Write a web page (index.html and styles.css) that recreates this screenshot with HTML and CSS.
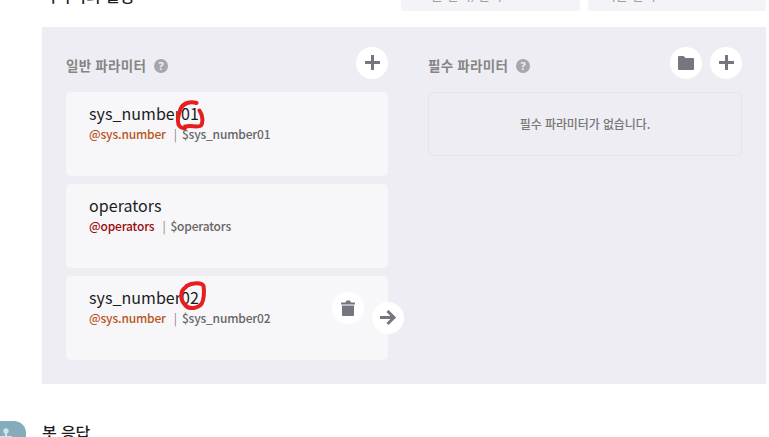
FILE: index.html
```html
<!DOCTYPE html>
<html lang="ko">
<head>
<meta charset="utf-8">
<title>파라미터 설정</title>
<link rel="stylesheet" href="styles.css">
</head>
<body>
<main class="page">
  <header class="toolbar">
    <h2 class="section-title">파라미터 설정</h2>
    <div class="field field-first"><span>문 선택, 선택</span></div>
    <div class="field field-last"><span>기본 선택</span></div>
  </header>

  <section class="panel">
    <div class="column general">
      <div class="column-head">
        <h3>일반 파라미터</h3>
        <span class="help">?</span>
        <div class="actions">
          <button class="round" aria-label="추가"><svg width="16" height="16"><path d="M7 0h3v6h6v3h-6v6h-3v-6h-6v-3h6z"/></svg></button>
        </div>
      </div>
      <div class="cards">
        <article class="card">
          <div class="name">sys_number01</div>
          <div class="meta"><span class="type">@sys.number</span><span class="bar">|</span><span>$sys_number01</span></div>
          <svg class="mark mark-first" width="34" height="36" viewBox="0 0 34 36"><path d="M22.500 5C16 3 9 5 6.500 11C4 18 3 25 5.500 28C8 31 12 31 11.500 28.500C17 27 24 30 27 27.500C29.500 24 28.500 17 25.500 12.500"/></svg>
        </article>
        <article class="card">
          <div class="name">operators</div>
          <div class="meta"><span class="type type-dark">@operators</span><span class="bar">|</span><span>$operators</span></div>
        </article>
        <article class="card">
          <div class="name">sys_number02</div>
          <div class="meta"><span class="type">@sys.number</span><span class="bar">|</span><span>$sys_number02</span></div>
          <svg class="mark mark-second" width="34" height="36" viewBox="0 0 34 36"><path d="M10.500 8C16 4.500 26 4 27.500 8C28.500 13 28 22 25.500 26C22 30 14 32 9.500 27.500C4 22 3.500 13 10 9"/></svg>
          <button class="round trash" aria-label="삭제"><svg width="14" height="17"><path d="M0 2.500h4.500l1-2h3.500l1 2H14v2H0zM1 5.500h12V15q0 1-1 1H2q-1 0-1-1z"/></svg></button>
          <button class="round arrow" aria-label="이동"><svg width="18" height="16" class="stroke"><path d="M1 7.500h14M8.500 1L15 7.500L8.500 14"/></svg></button>
        </article>
      </div>
    </div>
    <div class="column required">
      <div class="column-head">
        <h3>필수 파라미터</h3>
        <span class="help">?</span>
        <div class="actions">
          <button class="round" aria-label="폴더"><svg width="16" height="15"><path d="M0 1q0-1 1-1h4.500l2 2H15q1 0 1 1v10q0 1-1 1H1q-1 0-1-1z"/></svg></button>
          <button class="round" aria-label="추가"><svg width="16" height="16"><path d="M7 0h3v6h6v3h-6v6h-3v-6h-6v-3h6z"/></svg></button>
        </div>
      </div>
      <div class="empty"><span>필수 파라미터가 없습니다.</span></div>
    </div>
  </section>

  <section class="response">
    <div class="avatar"><svg width="26" height="26"><circle cx="6" cy="10" r="2.700"/><path d="M5 11h2v4h5v8H0v-8h5z"/></svg></div>
    <h2 class="section-title">봇 응답</h2>
  </section>
</main>
</body>
</html>
```
FILE: styles.css
```css
* { box-sizing: border-box; }
body {
  margin: 0;
  background: #fff;
  font-family: "Noto Sans CJK KR", "Noto Sans", sans-serif;
  color: #1c1c1c;
}
h2, h3 { margin: 0; }
.page { height: 437px; overflow: hidden; }
.toolbar { display: flex; height: 27px; padding-left: 42px; }
.section-title { font-size: 16px; line-height: 24px; font-weight: 500; letter-spacing: -0.1px; }
.toolbar .section-title { width: 359px; margin-top: -17px; }
.field {
  width: 179px;
  height: 40px;
  margin: -29px 8px 0 0;
  padding: 14px 16px 0;
  border-radius: 2px;
  background: #f3f3f8;
  color: #a0a0a0;
  font-size: 13px;
  line-height: 20px;
}
.field-first { padding-left: 30px; }
.field-last { width: 178px; margin-right: 0; }
.panel {
  display: flex;
  gap: 40px;
  width: 724px;
  height: 357px;
  margin-left: 42px;
  padding: 20px 24px 0;
  background: #eeedf3;
}
.general { width: 322px; }
.required { width: 314px; }
.column-head { display: flex; align-items: center; height: 32px; margin-bottom: 13px; }
.column-head h3 { font-size: 13.5px; line-height: 20px; font-weight: 700; letter-spacing: 0.25px; color: #858585; padding-top: 4px; white-space: nowrap; }
.help {
  width: 14px;
  height: 14px;
  margin: 6px 0 0 8px;
  border-radius: 50%;
  background: #a7a6aa;
  color: #f3f2f6;
  font: bold 11px/14px "Open Sans", sans-serif;
  text-align: center;
}
.actions { display: flex; gap: 8px; margin-left: auto; }
.round {
  display: grid;
  place-items: center;
  width: 32px;
  height: 32px;
  padding: 0;
  border: 0;
  border-radius: 50%;
  background: #fff;
}
.round svg { fill: #747680; }
.round .stroke { fill: none; stroke: #747680; stroke-width: 3; }
.cards { display: grid; gap: 8px; }
.card {
  position: relative;
  height: 84px;
  padding: 9px 23px;
  border-radius: 5px;
  background: #f7f7fa;
}
.name { font-size: 16px; line-height: 24px; letter-spacing: 0.05px; }
.meta { display: flex; font-size: 12px; line-height: 17px; font-weight: 500; color: #666; letter-spacing: -0.18px; }
.type { color: #b9541a; }
.type-dark { color: #980d0d; }
.bar { margin: 0 5px 0 8px; font-weight: 400; color: #8a8582; }
.mark { position: absolute; fill: none; stroke: #e81d20; stroke-width: 4; stroke-linecap: round; }
.mark-first { left: 108px; top: 6px; }
.mark-second { left: 110px; top: 2px; }
.trash { position: absolute; left: 266px; top: 16px; }
.arrow { position: absolute; left: 306px; top: 26px; }
.empty {
  display: grid;
  place-items: center;
  height: 64px;
  padding-bottom: 1px;
  border: 1px solid #e5e4e8;
  border-radius: 5px;
  color: #777;
  font-size: 12px;
  font-weight: 500;
  letter-spacing: -0.1px;
}
.response { display: flex; padding-top: 37px; }
.response .section-title { margin-top: -1px; }
.avatar { width: 26px; height: 32px; margin-right: 16px; border-radius: 0 12px 0 0; background: #84acbb; }
.avatar svg { fill: #d2e4ea; display: block; }
```
